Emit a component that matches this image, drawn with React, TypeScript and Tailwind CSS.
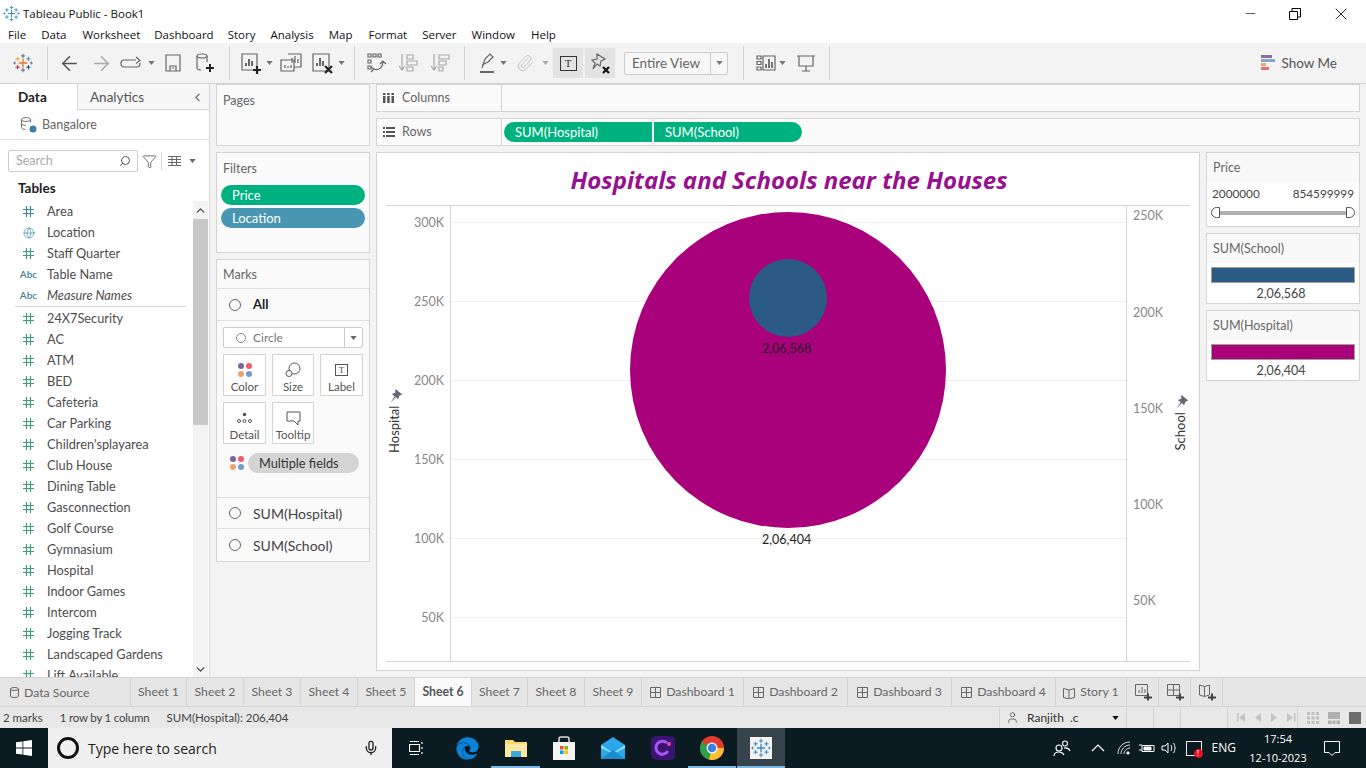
import React from 'react';
import { ArrowLeft, ArrowRight, ChevronDown, ChevronLeft, ChevronUp, Filter, Globe, Paperclip, Search, User, X, Minus, Mic } from 'lucide-react';
import { FaEdge } from 'react-icons/fa';

const menus = [
  ['File', 'ml-[8px]'], ['Data', 'ml-[15px]'], ['Worksheet', 'ml-[16px]'], ['Dashboard', 'ml-[14px]'], ['Story', 'ml-[14px]'],
  ['Analysis', 'ml-[15px]'], ['Map', 'ml-[15px]'], ['Format', 'ml-[16px]'], ['Server', 'ml-[15px]'], ['Window', 'ml-[15px]'], ['Help', 'ml-[16px]'],
];

const fieldsTop = [
  { name: 'Area', kind: 'hash', color: '#3f8a9c' },
  { name: 'Location', kind: 'globe' },
  { name: 'Staff Quarter', kind: 'hash' },
  { name: 'Table Name', kind: 'abc' },
  { name: 'Measure Names', kind: 'abc', italic: true },
];

const measures = [
  '24X7Security', 'AC', 'ATM', 'BED', 'Cafeteria', 'Car Parking', "Children'splayarea", 'Club House', 'Dining Table', 'Gasconnection',
  'Golf Course', 'Gymnasium', 'Hospital', 'Indoor Games', 'Intercom', 'Jogging Track', 'Landscaped Gardens', 'Lift Available',
];

const tabs = [
  { name: 'Sheet 1', w: 'w-[56px]' }, { name: 'Sheet 2', w: 'w-[57px]' }, { name: 'Sheet 3', w: 'w-[57px]' }, { name: 'Sheet 4', w: 'w-[57px]' },
  { name: 'Sheet 5', w: 'w-[57px]' }, { name: 'Sheet 6', w: 'w-[57px]', active: true }, { name: 'Sheet 7', w: 'w-[56px]' }, { name: 'Sheet 8', w: 'w-[57px]' },
  { name: 'Sheet 9', w: 'w-[57px]' }, { name: 'Dashboard 1', w: 'w-[102px]', dash: true }, { name: 'Dashboard 2', w: 'w-[104px]', dash: true },
  { name: 'Dashboard 3', w: 'w-[104px]', dash: true }, { name: 'Dashboard 4', w: 'w-[104px]', dash: true },
];

const leftTicks = [
  ['300K', 'top-[10px]'], ['250K', 'top-[89px]'], ['200K', 'top-[168px]'], ['150K', 'top-[247px]'], ['100K', 'top-[326px]'], ['50K', 'top-[405px]'],
];
const rightTicks = [
  ['250K', 'top-[3px]'], ['200K', 'top-[100px]'], ['150K', 'top-[196px]'], ['100K', 'top-[292px]'], ['50K', 'top-[388px]'],
];
const gridLines = ['top-[16px]', 'top-[95px]', 'top-[174px]', 'top-[253px]', 'top-[332px]', 'top-[411px]'];

const Caret = ({ className = '' }: { className?: string }) => (
  <svg width="7" height="4" viewBox="0 0 8 5" className={className}><path d="M0 0h8L4 5z" fill="currentColor" /></svg>
);

const Sep = ({ className }: { className: string }) => <div className={`h-[34px] w-px bg-[#d4d4d4] ${className}`} />;

const Cross = ({ x, y, s, c, w = 2 }: { x: number; y: number; s: number; c: string; w?: number }) => (
  <path d={`M${x - s} ${y}h${2 * s}M${x} ${y - s}v${2 * s}`} stroke={c} strokeWidth={w} fill="none" />
);

const Logo = ({ size = 20, mono }: { size?: number; mono?: boolean }) => {
  const c = (v: string) => (mono ? '#3a8ac4' : v);
  return (
    <svg width={size} height={size} viewBox="0 0 24 24">
      <Cross x={12} y={12} s={5} c={c('#e8762b')} w={1.6} />
      <Cross x={12} y={3.5} s={2.6} c={c('#5b6591')} w={1.2} />
      <Cross x={12} y={20.5} s={2.6} c={c('#5b6591')} w={1.2} />
      <Cross x={5.5} y={7} s={2.6} c={c('#e8a33d')} w={1.2} />
      <Cross x={18.5} y={7} s={2.6} c={c('#59879b')} w={1.2} />
      <Cross x={5.5} y={17} s={2.6} c={c('#c72035')} w={1.2} />
      <Cross x={18.5} y={17} s={2.6} c={c('#1f447e')} w={1.2} />
      <Cross x={2} y={12} s={1.8} c={c('#5b6591')} w={1} />
      <Cross x={22} y={12} s={1.8} c={c('#5b6591')} w={1} />
    </svg>
  );
};

const Ic = ({ w = 24, children }: { w?: number; children: React.ReactNode }) => (
  <svg width={w} height="24" viewBox={`0 0 ${w} 24`} fill="none" stroke="#666" strokeWidth="1.2">{children}</svg>
);

const HashIcon = ({ color }: { color: string }) => (
  <svg width="11" height="11" viewBox="0 0 11 11" fill="none" stroke={color} strokeWidth="1.2"><path d="M3.500 0v11M7.500 0v11M0 3.500h11M0 7.500h11" /></svg>
);

const FieldRow = ({ name, kind = 'hash', color = '#3f9c7c', italic }: { name: string; kind?: string; color?: string; italic?: boolean }) => (
  <div className="flex h-[21px] items-center">
    <div className="flex w-[47px] shrink-0 justify-center pr-[1px] pl-[11px]">
      {kind === 'hash' && <HashIcon color={color} />}
      {kind === 'globe' && <Globe size={12} strokeWidth={1.3} className="text-[#3f8aa8]" />}
      {kind === 'abc' && <span className="text-[10px] font-semibold text-[#3f7f99]">Abc</span>}
    </div>
    <span className={`whitespace-nowrap text-[12.75px] text-[#4d4d4d] ${italic ? 'italic' : ''}`}>{name}</span>
  </div>
);

const MarkBtn = ({ label, children }: { label: string; children: React.ReactNode }) => (
  <div className="flex h-[42px] flex-col items-center border border-[#d4d4d4] bg-white pt-[5px]">
    <div className="flex h-[20px] items-center">{children}</div>
    <span className="text-[11.5px] leading-[14px] text-[#555]">{label}</span>
  </div>
);

const Dots = () => (
  <svg width="16" height="16" viewBox="0 0 16 16">
    <circle cx="4" cy="4" r="3" fill="#7b6496" /><circle cx="12" cy="4" r="3" fill="#ef5d6c" />
    <circle cx="4" cy="12" r="3" fill="#f2a16c" /><circle cx="12" cy="12" r="3" fill="#6f9cc9" />
  </svg>
);

const Radio = () => <div className="h-[12px] w-[12px] rounded-full border-[1.5px] border-[#666]" />;

const Pin = () => (
  <svg width="14" height="14" viewBox="0 0 12 12" fill="#667" className="ml-[3px] rotate-90"><path d="M6 0l6 5-2.500 1-1 3-2-2-4.500 5 3.500-5.500-2.500-2 3-1z" /></svg>
);

const LegendCard = ({ title, value, color, className = '' }: { title: string; value: string; color: string; className?: string }) => (
  <div className={`flex h-[71px] flex-col border border-[#d4d4d4] bg-white ${className}`}>
    <div className="flex h-[29px] items-center bg-[#f9f9f9] px-[6px] pt-[2px] text-[12.5px] text-[#666]">{title}</div>
    <div className={`mx-[4px] mt-[4px] h-[16px] border border-[#a0a090] ${color}`} />
    <div className="pr-[4px] pt-[2px] text-center text-[12.5px] leading-[18px] text-[#444]">{value}</div>
  </div>
);

export default function App() {
  return (
    <div className="flex h-[768px] w-[1366px] flex-col overflow-hidden bg-[#f3f3f3] font-['Lato',sans-serif]">
      {/* Title bar */}
      <div className="flex h-[27px] shrink-0 items-center bg-white font-['Open_Sans',sans-serif]">
        <div className="ml-[3px]"><Logo size={17} mono /></div>
        <span className="ml-[3px] text-[11.5px] text-[#111]">Tableau Public - Book1</span>
        <Minus size={15} strokeWidth={1} className="ml-auto text-black" />
        <svg width="12" height="12" viewBox="0 0 12 12" fill="none" stroke="#000" className="ml-[31px]">
          <path d="M.5 3.500h8v8h-8zM3 3V.5h8.500V9H9" />
        </svg>
        <X size={20} strokeWidth={1} className="ml-[30px] mr-[15px] text-black" />
      </div>
      {/* Menu */}
      <div className="flex h-[16px] shrink-0 items-center bg-white font-['Open_Sans',sans-serif] text-[11.5px] text-[#111]">
        {menus.map(([m, c]) => <span key={m} className={c}>{m}</span>)}
      </div>
      {/* Toolbar */}
      <div className="flex h-[41px] shrink-0 items-center border-b border-[#d4d4d4] bg-[#f3f3f3] text-[#777]">
        <div className="ml-[13px] w-[20px]"><Logo size={20} /></div>
        <Sep className="ml-[14px]" />
        <ArrowLeft size={23} strokeWidth={1.6} className="ml-[10px] text-[#555]" />
        <ArrowRight size={23} strokeWidth={1.6} className="ml-[9px] text-[#aaa]" />
        <div className="ml-[5px]"><Ic w={26}><path d="M5 9h13M18 6l4 3.500-4 3M22 12c0 3-1 4-3 4H6c-2 0-3-1-3-3.500S4 9 6 9" /></Ic></div>
        <Caret className="ml-[4px]" />
        <div className="ml-[6px]"><Ic><path d="M5 4h14v16H5zM9 20v-5h6v5" /><path d="M11 17h2" /></Ic></div>
        <div className="ml-[8px]"><Ic><ellipse cx="9" cy="5" rx="5" ry="2" /><path d="M4 5v12c0 1 2 2 4 2M14 5v6" /><path d="M13 17h8M17 13v8" stroke="#222" strokeWidth="2" /></Ic></div>
        <Sep className="ml-[12px]" />
        <div className="ml-[8px]"><Ic><path d="M4 3h15v16H4z" /><path d="M8 15v-3M11 15V8M14 15v-5" strokeWidth="2" /><path d="M15 19h8M19 15v8" stroke="#222" strokeWidth="2.2" /></Ic></div>
        <Caret className="ml-[4px]" />
        <div className="ml-[6px]"><Ic><path d="M9 3h13v13H15M2 9h13v11H2z" /><path d="M13 12V7M16 12V5M19 12V8M6 17v-3M9 17v-2M12 17v-3" /></Ic></div>
        <div className="ml-[7px]"><Ic><path d="M3 3h16v17H3z" /><path d="M7 15v-3M10 15V7M13 15v-5" strokeWidth="2" /><path d="M15 15l7 7M22 15l-7 7" stroke="#222" strokeWidth="2.2" /></Ic></div>
        <Caret className="ml-[4px]" />
        <Sep className="ml-[9px]" />
        <div className="ml-[9px]"><Ic><path d="M4 3h3v3H4zM9 3h3v3H9zM14 3h3v3h-3zM4 9h3v3H4zM4 15h3v3H4zM10 18c5 2 9-2 9-7M16 13l3-3 3 3M7 21l3-3-3-2" /></Ic></div>
        <div className="ml-[8px]"><Ic><path stroke="#aaa" d="M6 3v15M3 15l3 4 3-4M11 4h6v4h-6zM11 10h10v4H11zM11 16h6v4h-6z" /></Ic></div>
        <div className="ml-[8px]"><Ic><path stroke="#aaa" d="M6 3v15M3 15l3 4 3-4M11 4h10v4H11zM11 10h7v4h-7zM11 16h4v4h-4z" /></Ic></div>
        <Sep className="ml-[12px]" />
        <div className="ml-[10px]"><Ic><path d="M7 17L10 8l5-5 3 3-5 5-6 3" /><path d="M5 21h14" strokeWidth="2" /></Ic></div>
        <Caret className="ml-[1px]" />
        <Paperclip size={18} strokeWidth={1.2} className="ml-[9px] text-[#bbb]" />
        <Caret className="ml-[8px] text-[#aaa]" />
        <div className="ml-[4px] flex h-[30px] w-[30px] items-center justify-center bg-[#e3e3e3]">
          <div className="flex h-[15px] w-[17px] items-center justify-center border border-[#333] font-['Liberation_Serif',serif] text-[11px] leading-none text-[#333]">T</div>
        </div>
        <div className="ml-[2px] flex h-[30px] w-[30px] items-center justify-center bg-[#e3e3e3]">
          <Ic><path d="M9 3l8 5-4 2-1 5-3-2-4 5 2-6-3-3 5-1z" /><path d="M15 16l6 6M21 16l-6 6" stroke="#111" strokeWidth="2.2" /></Ic>
        </div>
        <div className="ml-[9px] flex h-[23px] w-[104px] items-center rounded-[2px] border border-[#ccc] bg-[#f7f7f7]">
          <span className="w-[85px] pl-[7px] text-[13.5px] text-[#666]">Entire View</span>
          <div className="flex h-full flex-1 items-center justify-center border-l border-[#ccc]"><Caret /></div>
        </div>
        <Sep className="ml-[15px]" />
        <div className="ml-[10px]"><Ic><path d="M3 5h4v3H3zM3 10.500h4v3H3zM3 16h4v3H3zM9 5h12v14H9z" /><path d="M12 17v-4M15 17V8M18 17v-6" strokeWidth="1.8" /></Ic></div>
        <Caret className="ml-[1px]" />
        <div className="ml-[8px]"><Ic><path d="M3 5h18M5 5v10h14V5M12 15v5M8 20h8" /></Ic></div>
        <Sep className="ml-[11px]" />
        <div className="ml-auto mr-[29px] flex items-center">
          <svg width="15" height="16" viewBox="0 0 15 16">
            <path d="M0 0h11v3H0z" fill="#8a6f9c" /><path d="M0 4h14v3H0z" fill="#7fa6cf" /><path d="M0 8h5v3H0z" fill="#f2a16c" /><path d="M0 12h8v3H0z" fill="#ef6a7a" />
          </svg>
          <span className="ml-[5px] text-[13.5px] text-[#555]">Show Me</span>
        </div>
      </div>

      {/* Main */}
      <div className="flex h-[593px] shrink-0">
        {/* Data pane */}
        <div className="flex w-[210px] shrink-0 flex-col border-r border-[#d4d4d4] bg-white">
          <div className="flex h-[26px] shrink-0 text-[13.5px]">
            <div className="flex w-[77px] items-center pl-[18px] font-bold text-[#222]">Data</div>
            <div className="flex flex-1 items-center border-b border-l border-[#d4d4d4] bg-[#f7f7f7] pl-[12px] pt-[2px] text-[#555]">
              Analytics
              <ChevronLeft size={13} className="ml-auto mr-[5px] text-[#666]" />
            </div>
          </div>
          <div className="flex h-[30px] shrink-0 items-center border-b border-[#e3e3e3] pl-[20px] text-[12.5px] text-[#666]">
            <svg width="17" height="17" viewBox="0 0 17 17" fill="none" stroke="#777">
              <ellipse cx="6" cy="3.500" rx="4.500" ry="2" /><path d="M1.500 3.500v8c0 1 2 2 4 2M10.500 3.500v3M1.500 7.500c0 1 2 2 4.500 2" /><circle cx="13" cy="13" r="3.500" fill="#3b80a8" stroke="none" />
            </svg>
            <span className="ml-[5px] pt-[2px]">Bangalore</span>
          </div>
          <div className="ml-[8px] mt-[10px] flex h-[22px] shrink-0 items-center">
            <div className="flex h-[22px] w-[130px] items-center rounded-[2px] border border-[#ccc] pl-[7px] pr-[6px] text-[12.5px] text-[#aaa]">
              Search
              <Search size={12} className="ml-auto scale-x-[-1] text-[#555]" />
            </div>
            <Filter size={15} strokeWidth={1.2} className="ml-[4px] text-[#444]" />
            <div className="ml-[4px] h-[18px] w-px bg-[#d4d4d4]" />
            <svg width="13" height="10" viewBox="0 0 13 10" fill="none" stroke="#666" className="ml-[6px]">
              <path d="M0 .5h13M0 3.500h13M0 6.500h13M0 9.500h13M4 0v10M8.500 0v10" />
            </svg>
            <Caret className="ml-[8px] text-[#666]" />
          </div>
          <div className="h-[29px] shrink-0 pl-[18px] pt-[7px] text-[13.5px] font-bold leading-[18px] text-[#222]">Tables</div>
          <div className="flex min-h-0 flex-1">
            <div className="min-w-0 flex-1 overflow-hidden">
              {fieldsTop.map(f => <FieldRow key={f.name} {...f} />)}
              <div className="ml-[15px] mr-[7px] mb-[1px] h-px bg-[#d4d4d4]" />
              {measures.map(m => <FieldRow key={m} name={m} />)}
            </div>
            <div className="mr-[1px] flex w-[15px] shrink-0 flex-col bg-[#f3f3f3]">
              <div className="flex h-[18px] items-center justify-center"><ChevronUp size={13} strokeWidth={2.4} className="text-[#444]" /></div>
              <div className="h-[206px] bg-[#c8c8c8]" />
              <div className="mt-auto flex h-[16px] items-center justify-center"><ChevronDown size={13} strokeWidth={2.4} className="text-[#444]" /></div>
            </div>
          </div>
        </div>

        {/* Shelves */}
        <div className="ml-[6px] flex w-[154px] shrink-0 flex-col">
          <div className="h-[62px] border border-[#d4d4d4] bg-[#fafafa] pl-[6px] pt-[7px] text-[12.5px] text-[#666]">Pages</div>
          <div className="mt-[6px] h-[101px] border border-[#d4d4d4] bg-[#fafafa]">
            <div className="pl-[6px] pt-[7px] text-[12.5px] leading-[18px] text-[#666]">Filters</div>
            <div className="mx-[4px] mt-[7px] flex h-[20px] items-center rounded-full bg-[#00b180] pl-[11px] pt-[1px] text-[13px] text-white">Price</div>
            <div className="mx-[4px] mt-[3px] flex h-[20px] items-center rounded-full bg-[#4996b2] pl-[11px] pt-[1px] text-[13px] text-white">Location</div>
          </div>
          <div className="mt-[6px] h-[303px] border border-[#d4d4d4] bg-[#fafafa]">
            <div className="flex h-[29px] items-center border-b border-[#e0e0e0] pl-[6px] pt-[2px] text-[12.5px] text-[#666]">Marks</div>
            <div className="flex h-[32px] items-center border-b border-[#e0e0e0] pl-[12px] text-[13px] font-bold text-[#222]">
              <Radio /><span className="ml-[12px]">All</span>
            </div>
            <div className="px-[6px] pt-[6px]">
              <div className="flex h-[21px] items-center rounded-[2px] border border-[#ccc] bg-white">
                <div className="ml-[12px] h-[10px] w-[10px] rounded-full border border-[#888]" />
                <span className="ml-[7px] w-[90px] pt-[1px] text-[12px] text-[#777]">Circle</span>
                <div className="ml-auto flex h-full w-[18px] items-center justify-center border-l border-[#ccc]"><Caret className="text-[#666]" /></div>
              </div>
              <div className="mt-[6px] grid grid-cols-[43px_42px_43px] gap-x-[6px] gap-y-[6px]">
                <MarkBtn label="Color"><Dots /></MarkBtn>
                <MarkBtn label="Size">
                  <svg width="16" height="16" viewBox="0 0 16 16" fill="none" stroke="#555"><circle cx="9.500" cy="6.500" r="5.500" /><circle cx="4" cy="11.500" r="3" fill="#fff" /></svg>
                </MarkBtn>
                <MarkBtn label="Label">
                  <div className="flex h-[12px] w-[13px] items-center justify-center border border-[#555] font-['Liberation_Serif',serif] text-[9px] leading-none text-[#444]">T</div>
                </MarkBtn>
                <MarkBtn label="Detail">
                  <svg width="15" height="12" viewBox="0 0 15 12" fill="none" stroke="#555"><circle cx="7.500" cy="2.500" r="1.800" fill="#555" stroke="none" /><circle cx="2" cy="9" r="1.500" /><circle cx="7.500" cy="9" r="1.500" /><circle cx="13" cy="9" r="1.500" /></svg>
                </MarkBtn>
                <MarkBtn label="Tooltip">
                  <svg width="15" height="15" viewBox="0 0 15 15" fill="none" stroke="#555"><path d="M1 1h13v9h-2v4l-4-4H1z" /></svg>
                </MarkBtn>
              </div>
              <div className="mt-[9px] flex items-center pl-[6px]">
                <Dots />
                <div className="ml-[3px] flex h-[20px] w-[111px] items-center rounded-full bg-[#d4d4d4] pl-[11px] pt-[1px] text-[12.75px] text-[#333]">Multiple fields</div>
              </div>
            </div>
            <div className="mt-[24px] flex h-[32px] items-center border-y border-[#e0e0e0] pl-[12px] text-[14px] text-[#444]">
              <Radio /><span className="ml-[12px]">SUM(Hospital)</span>
            </div>
            <div className="flex h-[32px] items-center pl-[12px] text-[14px] text-[#444]">
              <Radio /><span className="ml-[12px]">SUM(School)</span>
            </div>
          </div>
        </div>

        {/* Viz area */}
        <div className="ml-[6px] flex flex-1 flex-col pr-[6px]">
          <div className="flex h-[28px] border border-[#d4d4d4] bg-[#fafafa] text-[12.5px] text-[#666]">
            <div className="flex w-[125px] items-center border-r border-[#d4d4d4] pl-[6px]">
              <svg width="11" height="10" viewBox="0 0 11 10" fill="#555"><path d="M0 3h2.500v7H0zM4.200 3h2.500v7H4.200zM8.500 3H11v7H8.500zM0 0h2.500v2H0zM4.200 0h2.500v2H4.200zM8.500 0H11v2H8.500z" /></svg>
              <span className="ml-[8px] pt-[1px]">Columns</span>
            </div>
          </div>
          <div className="mt-[6px] flex h-[28px] border border-[#d4d4d4] bg-[#fafafa] text-[13px] text-[#666]">
            <div className="flex w-[125px] items-center border-r border-[#d4d4d4] pl-[6px] text-[12.5px]">
              <svg width="12" height="10" viewBox="0 0 12 10" fill="#555"><path d="M0 0h2v2H0zM3 0h9v2H3zM0 4h2v2H0zM3 4h9v2H3zM0 8h2v2H0zM3 8h9v2H3z" /></svg>
              <span className="ml-[7px] pt-[1px]">Rows</span>
            </div>
            <div className="ml-[2px] mt-[3px] flex h-[20px] w-[148px] items-center rounded-l-full bg-[#00b180] pl-[11px] pt-[1px] text-white">SUM(Hospital)</div>
            <div className="ml-[2px] mt-[3px] flex h-[20px] w-[148px] items-center rounded-r-full bg-[#00b180] pl-[11px] pt-[1px] text-white">SUM(School)</div>
          </div>
          <div className="mt-[6px] flex flex-1 gap-[6px] pb-[6px]">
            {/* Chart */}
            <div className="flex h-[519px] w-[824px] flex-col border border-[#d4d4d4] bg-white px-[9px]">
              <div className="flex h-[52px] shrink-0 items-center justify-center pl-[2px] pt-[2px] font-['Open_Sans',sans-serif] text-[24px] font-bold italic text-[#98108f]">
                Hospitals and Schools near the Houses
              </div>
              <div className="flex h-[457px] border-y border-[#d4d4d4]">
                <div className="relative w-[65px] shrink-0 border-r border-[#d4d4d4] text-[12.5px] text-[#888]">
                  {leftTicks.map(([t, c]) => <span key={t} className={`absolute right-[6px] leading-[14px] ${c}`}>{t}</span>)}
                  <div className="absolute left-[-26px] top-[205px] flex w-[70px] -rotate-90 items-center justify-center text-[13px] text-[#333]">
                    Hospital
                    <Pin />
                  </div>
                </div>
                <div className="relative flex-1">
                  {gridLines.map(c => <div key={c} className={`absolute inset-x-0 h-px bg-[#efefef] ${c}`} />)}
                  <div className="absolute left-[179px] top-[6px] h-[316px] w-[316px] rounded-full bg-[#a9007b]" />
                  <div className="absolute left-[298px] top-[53px] h-[78px] w-[78px] rounded-full bg-[#2b5a85]" />
                  <span className="absolute left-[311px] top-[135px] text-[12.5px] leading-[15px] text-[#222]">2,06,568</span>
                  <span className="absolute left-[311px] top-[326px] text-[12.5px] leading-[15px] text-[#222]">2,06,404</span>
                </div>
                <div className="relative w-[64px] shrink-0 border-l border-[#d4d4d4] text-[12.5px] text-[#888]">
                  {rightTicks.map(([t, c]) => <span key={t} className={`absolute left-[6px] leading-[14px] ${c}`}>{t}</span>)}
                  <div className="absolute left-[19px] top-[207px] flex w-[70px] -rotate-90 items-center justify-center text-[13px] text-[#333]">
                    School
                    <Pin />
                  </div>
                </div>
              </div>
            </div>
            {/* Legends */}
            <div className="flex w-[154px] shrink-0 flex-col">
              <div className="h-[75px] border border-[#d4d4d4] bg-white">
                <div className="flex h-[29px] items-center bg-[#f9f9f9] px-[6px] pt-[2px] text-[12.5px] text-[#666]">Price</div>
                <div className="mt-[4px] flex justify-between px-[5px] text-[11.75px] leading-[16px] text-[#444]"><span>2000000</span><span>854599999</span></div>
                <div className="mx-[4px] mt-[5px] flex h-[11px] items-center">
                  <div className="h-[11px] w-[9px] rounded-l-full border border-[#555] bg-white" />
                  <div className="h-[4px] flex-1 bg-[#b0b0b0]" />
                  <div className="h-[11px] w-[9px] rounded-r-full border border-[#555] bg-white" />
                </div>
              </div>
              <LegendCard title="SUM(School)" value="2,06,568" color="bg-[#2b5a85]" className="mt-[6px]" />
              <LegendCard title="SUM(Hospital)" value="2,06,404" color="bg-[#a9007b]" className="mt-[6px]" />
            </div>
          </div>
        </div>
      </div>

      {/* Sheet tabs */}
      <div className="flex h-[30px] shrink-0 border-y border-[#d4d4d4] bg-[#e6e6e6] text-[12.25px] text-[#666]">
        <div className="flex w-[131px] items-center border-r border-[#d4d4d4] pl-[10px]">
          <svg width="9" height="11" viewBox="0 0 9 11" fill="none" stroke="#666"><ellipse cx="4.500" cy="2" rx="4" ry="1.500" /><path d="M.5 2v7c0 1 2 1.500 4 1.500s4-.5 4-1.500V2" /></svg>
          <span className="ml-[5px] pt-[2px]">Data Source</span>
        </div>
        {tabs.map(t => (
          <div key={t.name} className={`flex items-center justify-center border-r border-[#d4d4d4] pt-[1px] ${t.w} ${t.active ? 'bg-[#fafafa] font-bold text-[#555]' : ''}`}>
            {t.dash && (
              <svg width="11" height="11" viewBox="0 0 11 11" fill="none" stroke="#666" className="mr-[5px]"><path d="M.5.5h10v10H.5zM.5 5.500h10M5.500.5v10" /></svg>
            )}
            {t.name}
          </div>
        ))}
        <div className="flex w-[71px] items-center justify-center border-r border-[#d4d4d4] pt-[1px]">
          <svg width="12" height="12" viewBox="0 0 12 12" fill="none" stroke="#666" className="mr-[5px]"><path d="M.5 1.500L6 3l5.500-1.500v9L6 12 .5 10.500zM6 3v9" /></svg>
          Story 1
        </div>
        {['sheet', 'dash', 'story'].map(k => (
          <div key={k} className="flex w-[32px] items-center justify-center border-r border-[#d4d4d4]">
            <svg width="18" height="18" viewBox="0 0 18 18" fill="none" stroke="#666">
              {k === 'sheet' && <path d="M1.500 1.500h12v11h-12zM5 10V7M8 10V4M11 10V6" />}
              {k === 'dash' && <path d="M1.500 1.500h12v11h-12zM1.500 7h12M7.500 1.500v11" />}
              {k === 'story' && <path d="M1.500 2l5 1.500 5-1.500v10l-5 1.500-5-1.500zM6.500 3.500v10" />}
              <path d="M10 14.500h8M14 10.500v7" stroke="#444" strokeWidth="2" />
            </svg>
          </div>
        ))}
      </div>

      {/* Status bar */}
      <div className="flex h-[21px] shrink-0 items-center bg-[#e8e8e8] text-[11.5px] text-[#444]">
        <span className="ml-[3px]">2 marks</span>
        <span className="ml-[17px] tracking-[-0.2px]">1 row by 1 column</span>
        <span className="ml-[17px]">SUM(Hospital): 206,404</span>
        <div className="ml-auto flex h-full items-center">
          <div className="flex h-full w-[127px] items-center border-l border-[#d4d4d4] pl-[6px] text-[#333]">
            <User size={13} strokeWidth={1.3} className="text-[#444]" />
            <span className="ml-[8px] whitespace-pre text-[12px]">Ranjith  .c</span>
            <Caret className="ml-auto mr-[7px] text-[#111]" />
          </div>
          <div className="h-full w-[27px] border-l border-[#d4d4d4]" />
          <div className="h-full w-[27px] border-l border-[#d4d4d4]" />
          <div className="h-full w-[47px] border-l border-[#d4d4d4]" />
          <div className="flex h-full w-[71px] items-center gap-[8px] border-x border-[#d4d4d4] pl-[9px]">
            <svg width="60" height="9" viewBox="0 0 60 9" fill="#c4c4c4"><path d="M0 0h1.500v9H0zM8 0v9L2 4.500zM24 0v9l-6-4.500zM34 0v9l6-4.500zM50 0v9l6-4.500zM57 0h1.500v9H57z" /></svg>
          </div>
          <div className="flex h-full w-[68px] items-center gap-[9px] pl-[9px]">
            <svg width="12" height="12" viewBox="0 0 12 12" fill="#c0c0c0"><path d="M0 0h3v3H0zM4.500 0h3v3h-3zM9 0h3v3H9zM0 4.500h3v3H0zM4.500 4.500h3v3h-3zM9 4.500h3v3H9zM0 9h3v3H0zM4.500 9h3v3h-3zM9 9h3v3H9z" /></svg>
            <svg width="12" height="12" viewBox="0 0 12 12" fill="#b0b0b0"><path d="M0 0h12v7H0zM0 8.500h3.500V12H0zM4.500 8.500h3V12h-3zM8.500 8.500H12V12H8.500z" /></svg>
            <div className="h-[12px] w-[12px] bg-[#6d6d6d]" />
          </div>
        </div>
      </div>

      {/* Taskbar */}
      <div className="flex h-[40px] shrink-0 items-center bg-[#0a1b21]">
        <div className="flex w-[48px] justify-center">
          <svg width="16" height="16" viewBox="0 0 16 16" fill="#fff"><path d="M0 2.300l6.500-.9v6.200H0zM7.300 1.300L16 0v7.600H7.300zM0 8.400h6.500v6.200L0 13.700zM7.300 8.400H16V16l-8.700-1.200z" /></svg>
        </div>
        <div className="flex h-full w-[344px] items-center bg-[#f0f0f0] font-['Open_Sans',sans-serif] text-[14px] text-[#222]">
          <div className="ml-[9px] h-[22px] w-[22px] rounded-full border-[3px] border-[#111]" />
          <span className="ml-[9px]">Type here to search</span>
          <Mic size={16} className="ml-auto mr-[13px] text-[#222]" />
        </div>
        <div className="ml-[17px] flex w-[16px] justify-center">
          <svg width="16" height="14" viewBox="0 0 16 14" fill="none" stroke="#fff"><path d="M.5 3.500h10v7H.5zM1 .5h9M1 13.500h9M13 1v2M13 6v2M13 11v2" strokeWidth="1.200" /></svg>
        </div>
        <div className="ml-[18px] flex h-full w-[48px] items-center justify-center">
          <FaEdge size={23} className="text-[#0a84d8]" />
        </div>
        <div className="flex h-full w-[49px] items-center justify-center border-b-[2px] border-[#7ab8e6] pt-[2px]">
          <svg width="22" height="18" viewBox="0 0 22 18"><path d="M0 1h8l2 2h12v15H0z" fill="#f7d774" /><path d="M0 5h22v13H0z" fill="#fde8a0" /><path d="M6 12h10v6H6z" fill="#38a9e0" /></svg>
        </div>
        <div className="flex h-full w-[48px] items-center justify-center">
          <svg width="24" height="24" viewBox="0 0 24 24"><path d="M7 7V3c0-1 1-2 2-2h6c1 0 2 1 2 2v4" fill="none" stroke="#ddd" strokeWidth="1.5" /><path d="M1 6h22v18H1z" fill="#f4f4f4" /><path d="M8 10h3.500v3.500H8z" fill="#f25022" /><path d="M12.500 10H16v3.500h-3.500z" fill="#7fba00" /><path d="M8 14.500h3.500V18H8z" fill="#00a4ef" /><path d="M12.500 14.500H16V18h-3.500z" fill="#ffb900" /></svg>
        </div>
        <div className="flex h-full w-[50px] items-center justify-center">
          <svg width="24" height="22" viewBox="0 0 24 22"><path d="M0 8l12-8 12 8v14H0z" fill="#2aa7e8" /><path d="M0 8l12 8 12-8v3l-12 6L0 11z" fill="#8ce0ff" /><path d="M0 22l12-9 12 9z" fill="#1b8ccf" /></svg>
        </div>
        <div className="flex h-full w-[50px] items-center justify-center">
          <div className="flex h-[24px] w-[24px] items-center justify-center rounded-[5px] bg-[#3a1470]">
            <svg width="18" height="18" viewBox="0 0 18 18" fill="none"><path d="M13 4a6.500 6.500 0 1 0 1 8" stroke="#a855f7" strokeWidth="3" /><circle cx="15" cy="5" r="2" fill="#ec4899" /></svg>
          </div>
        </div>
        <div className="flex h-full w-[48px] items-center justify-center border-b-[2px] border-[#7ab8e6] pt-[2px]">
          <svg width="24" height="24" viewBox="0 0 24 24">
            <circle cx="12" cy="12" r="12" fill="#e33b2e" />
            <path d="M12 12L1.600 6 0 12a12 12 0 0 0 9 11.600z" fill="#2aa24a" />
            <path d="M12 12l-3 11.600A12 12 0 0 0 24 12z" fill="#fbc02d" />
            <circle cx="12" cy="12" r="5.500" fill="#fff" /><circle cx="12" cy="12" r="4.300" fill="#3b82e8" />
          </svg>
        </div>
        <div className="ml-[1px] flex h-full w-[48px] items-center justify-center border-b-[2px] border-[#7ab8e6] bg-[#36434a] pt-[2px]">
          <div className="flex h-[22px] w-[22px] items-center justify-center bg-[#f2f2f2]"><Logo size={20} mono /></div>
        </div>
        <div className="ml-auto flex h-full items-center text-white">
          <svg width="18" height="16" viewBox="0 0 18 16" fill="none" stroke="#fff" strokeWidth="1.100"><circle cx="6" cy="8" r="3" /><path d="M1 16c0-3 2-4 5-4s4 1 5 3" /><circle cx="12" cy="3.500" r="2.500" /><path d="M11 8c3-.5 5 .5 6 3" /></svg>
          <svg width="14" height="8" viewBox="0 0 14 8" fill="none" stroke="#fff" strokeWidth="1.200" className="ml-[20px]"><path d="M1 7l6-6 6 6" /></svg>
          <svg width="14" height="14" viewBox="0 0 14 14" fill="none" stroke="#ddd" className="ml-[12px]"><path d="M1 13C1 6 6 1 13 1M4 13c0-5 4-9 9-9M7 13c0-3 3-6 6-6" /><circle cx="11" cy="12" r="1.200" fill="#fff" /></svg>
          <svg width="16" height="10" viewBox="0 0 16 10" fill="none" stroke="#fff" className="ml-[8px]"><path d="M3 2.500h12v6H3z" /><path d="M5 4h7v3H5z" fill="#fff" /><path d="M0 2h3M0 7h3" /></svg>
          <svg width="16" height="14" viewBox="0 0 16 14" fill="none" stroke="#fff" className="ml-[6px]"><path d="M1 5h3l3-3v10L4 9H1zM10 4c1 1.500 1 4 0 6M12.500 2c2 3 2 7 0 10" /></svg>
          <div className="relative ml-[9px] h-[15px] w-[16px] border border-[#eee]">
            <div className="absolute bottom-[-3px] right-[-2px] flex h-[9px] w-[9px] items-center justify-center rounded-full bg-[#e81123] text-[7px] font-bold leading-none">!</div>
          </div>
          <span className="ml-[10px] font-['Open_Sans',sans-serif] text-[12px]">ENG</span>
          <div className="ml-[13px] w-[58px] text-center font-['Open_Sans',sans-serif] text-[11px] leading-[19px]">
            <div>17:54</div>
            <div className="whitespace-nowrap">12-10-2023</div>
          </div>
          <svg width="16" height="15" viewBox="0 0 16 15" fill="none" stroke="#fff" className="ml-[17px] mr-[26px]"><path d="M.5.5h15v11H11l-3 3-3-3H.5z" /></svg>
        </div>
      </div>
    </div>
  );
}
